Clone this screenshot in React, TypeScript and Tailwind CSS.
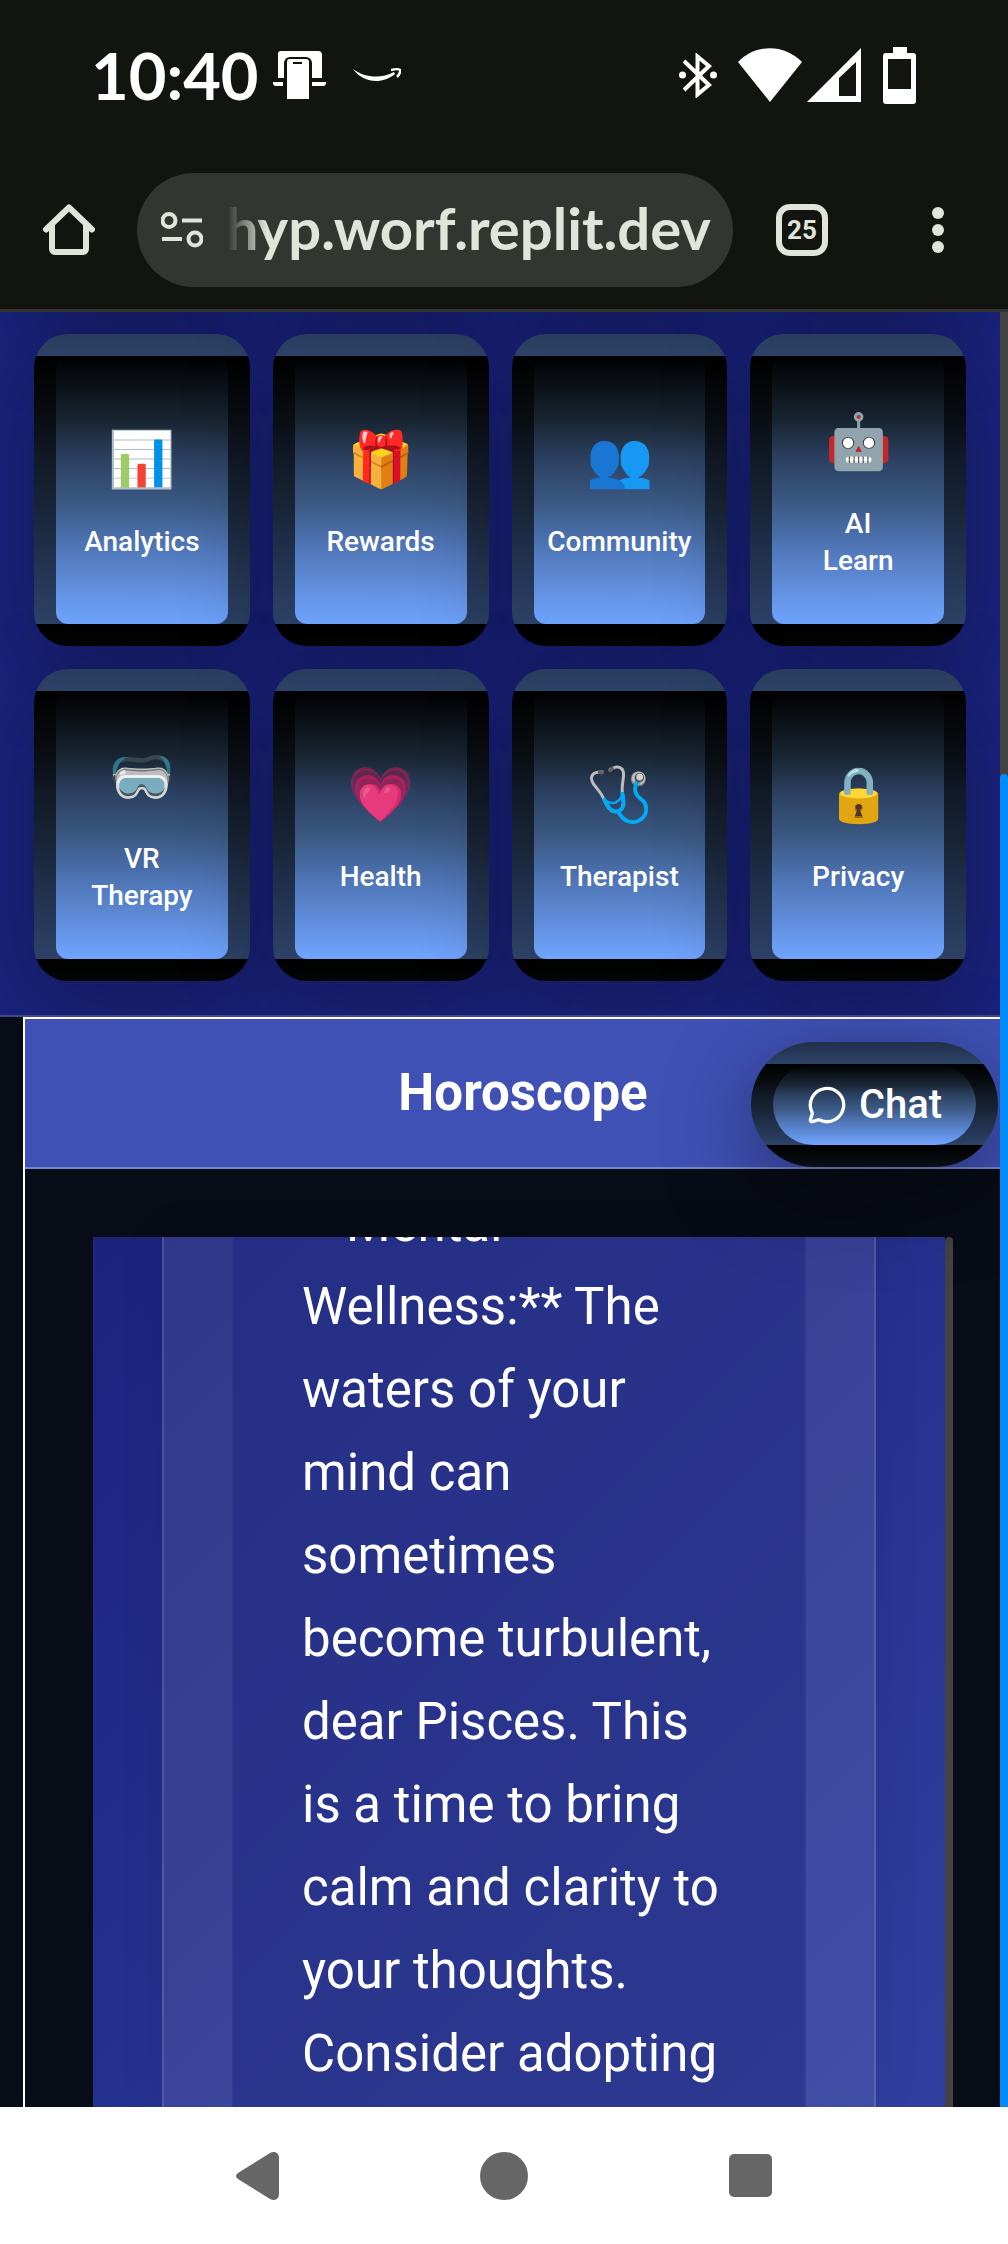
import { MessageCircle } from "lucide-react";

type Tile = { icon: string; label: string };

const tiles: Tile[] = [
  { icon: "📊", label: "Analytics" },
  { icon: "🎁", label: "Rewards" },
  { icon: "👥", label: "Community" },
  { icon: "🤖", label: "AI\nLearn" },
  { icon: "🥽", label: "VR\nTherapy" },
  { icon: "💗", label: "Health" },
  { icon: "🩺", label: "Therapist" },
  { icon: "🔒", label: "Privacy" },
];

const reading = `**Mental
Wellness:** The
waters of your
mind can
sometimes
become turbulent,
dear Pisces. This
is a time to bring
calm and clarity to
your thoughts.
Consider adopting`;

function StatusBar() {
  return (
    <div className="flex h-[150px] items-center pr-[92px] pl-[91px] text-white">
      <time className="w-[165px] font-['Lato'] text-[65px] leading-[64px] font-bold">10:40</time>
      <svg className="ml-[17px] h-[50px] w-[53px]" viewBox="0 0 53 50" fill="currentColor" aria-hidden="true">
        <path d="M8 1h37a4 4 0 0 1 4 4v23H39V13a6 6 0 0 0-6-6H17a6 6 0 0 0-6 6v15H5V4a3 3 0 0 1 3-3Z" />
        <path d="M0 32h10v4H3a3 3 0 0 1-3-3ZM39 32h14v1a3 3 0 0 1-3 3H39Z" />
        <path fillRule="evenodd" d="M16 9h17a3 3 0 0 1 3 3v37H14V12a3 3 0 0 1 2-3Zm4 3v2h9v-2Z" />
      </svg>
      <svg className="ml-[27px] h-4 w-12" viewBox="0 0 48 16" aria-hidden="true">
        <path d="M0 2c12 9 28 10 41 3l1 2c-13 11-32 9-42-5Z" fill="currentColor" />
        <path d="M38 3c4-1 8-1 9 0s-1 5-3 7" fill="none" stroke="currentColor" strokeWidth="2.5" />
      </svg>
      <svg className="ml-auto h-[45px] w-[38px]" viewBox="0 0 38 45" fill="none" stroke="currentColor" strokeWidth="4" aria-hidden="true">
        <path d="M5 8l25 24L18.500 41.500V3.500L30 13 5 37" />
        <circle cx="3.500" cy="22" r="3.500" fill="currentColor" stroke="none" />
        <circle cx="34.500" cy="22" r="3.500" fill="currentColor" stroke="none" />
      </svg>
      <svg className="ml-[21px] h-[54px] w-[64px]" viewBox="0 0 64 54" fill="currentColor" aria-hidden="true">
        <path d="M0 14C18-4.500 46-4.500 64 14L32 54Z" />
      </svg>
      <svg className="ml-[5px] h-[54px] w-[54px]" viewBox="0 0 54 54" fill="currentColor" aria-hidden="true">
        <path fillRule="evenodd" d="M54 0v54H0Zm-5 14L32 30v18h17Z" />
      </svg>
      <svg className="ml-[22px] h-[57px] w-[33px]" viewBox="0 0 33 57" fill="currentColor" aria-hidden="true">
        <path fillRule="evenodd" d="M10 0h14v6h6a3 3 0 0 1 3 3v45a3 3 0 0 1-3 3H3a3 3 0 0 1-3-3V9a3 3 0 0 1 3-3h7ZM5 12v30h23V12Z" />
      </svg>
    </div>
  );
}

function Toolbar() {
  return (
    <div className="flex h-[159px] items-center pr-[52px] pl-[43px] text-[#e1e4db]">
      <button aria-label="Home" className="shrink-0">
        <svg className="h-[52px] w-[52px]" viewBox="0 0 52 52" fill="none" stroke="currentColor" strokeWidth="6" strokeLinejoin="round" strokeLinecap="round" aria-hidden="true">
          <path d="M3 25.500 26 3.500l23 22" />
          <path d="M9 21v24a3 3 0 0 0 3 3h28a3 3 0 0 0 3-3V21" />
        </svg>
      </button>
      <div className="ml-[42px] flex h-[114px] min-w-0 flex-1 items-center rounded-full bg-[#333630] pr-[22px] pl-6">
        <button aria-label="Site information" className="shrink-0">
          <svg className="h-9 w-[42px]" viewBox="0 0 42 36" fill="none" stroke="currentColor" strokeWidth="4" aria-hidden="true">
            <circle cx="8" cy="8.500" r="6.500" />
            <path d="M21 8.500h20M1 27h20" />
            <circle cx="34" cy="27" r="6.500" />
          </svg>
        </button>
        <input
          aria-label="Address"
          readOnly
          value="hyp.worf.replit.dev"
          className="ml-5 min-w-0 flex-1 bg-transparent pb-1 text-right font-['Lato'] text-[58px] leading-[70px] font-bold outline-none [mask-image:linear-gradient(to_right,transparent_4px,black_44px)]"
        />
      </div>
      <button aria-label="Open tabs" className="ml-[43px] flex h-[52px] w-[52px] shrink-0 items-center justify-center rounded-[14px] border-6 border-current text-[26px] leading-none font-bold">
        25
      </button>
      <button aria-label="More options" className="ml-[92px] flex w-[36px] shrink-0 flex-col items-center gap-[5px]">
        <span className="h-3 w-3 rounded-full bg-current" />
        <span className="h-3 w-3 rounded-full bg-current" />
        <span className="h-3 w-3 rounded-full bg-current" />
      </button>
    </div>
  );
}

function TileGrid() {
  return (
    <nav className="overflow-hidden border-b-2 border-[#47468c] bg-[#1a237e] px-[34px] pb-[34px]">
      <div className="-mt-[121px] grid grid-cols-4 gap-[23px]">
        {tiles.slice(0, 4).map((tile) => (
          <div key={tile.label} className="h-[120px] rounded-[34px] shadow-[0_23px_91px_rgba(0,0,0,0.3)]" />
        ))}
        {tiles.map((tile) => (
          <button
            key={tile.label}
            className="flex h-[312px] flex-col items-center justify-center rounded-[34px] border-[22px] border-black/60 bg-linear-[180deg,#000000,#1a2634_25%,#2b4060_38%,#3b5984_55%,#5077b9_72%,#70a5ff] text-white shadow-[0_23px_91px_rgba(0,0,0,0.3)]"
          >
            <span aria-hidden="true" className="mt-2 mb-8 flex h-[63px] items-center text-[54px] leading-[63px]">
              {tile.icon}
            </span>
            <span className="text-[28px] leading-[37px] font-medium whitespace-pre-line">{tile.label}</span>
          </button>
        ))}
      </div>
    </nav>
  );
}

function Horoscope() {
  return (
    <section className="ml-[23px] flex min-h-0 w-full flex-1 flex-col border-2 border-b-0 border-white">
      <header className="border-b-2 border-[#7986cb] bg-[#3f51b5] py-[42px] text-center">
        <h2 className="text-[51px] leading-[64px] font-bold text-white">Horoscope</h2>
      </header>
      <div className="flex min-h-0 flex-1 px-[68px] pt-[68px]">
        <div className="flex min-w-0 flex-1 bg-linear-[135deg,#1a237e,#303f9f] px-[69px]">
          <div className="flex min-w-0 flex-1 overflow-hidden border-x-2 border-white/12 bg-white/9 px-[68px] shadow-[0_0_45px_rgba(0,0,0,0.08)]">
            <div className="min-w-0 flex-1 border-x-2 border-white/3 bg-[#1a237e]/50 px-[68px]">
              <p className="-mt-[55px] text-[51px] leading-[83px] whitespace-pre text-white">{reading}</p>
            </div>
          </div>
        </div>
        <div className="w-2 rounded-t-full bg-[#424242]" />
      </div>
    </section>
  );
}

function NavigationBar() {
  return (
    <footer className="flex h-[137px] items-center justify-center gap-[201px] bg-white text-[#666666]">
      <button aria-label="Back">
        <svg className="h-12 w-[43px]" viewBox="0 0 43 48" fill="currentColor" aria-hidden="true">
          <path d="M2 21 34 1c5-2.500 9 0 9 5v36c0 5-4 7.500-9 5L2 27c-2.500-1.500-2.500-4.500 0-6Z" />
        </svg>
      </button>
      <button aria-label="Home screen" className="h-12 w-12 rounded-full bg-current" />
      <button aria-label="Recent apps" className="h-[43px] w-[43px] rounded-[5px] bg-current" />
    </footer>
  );
}

export default function App() {
  return (
    <div className="flex h-screen flex-col overflow-hidden bg-[#080c16] font-['Roboto',sans-serif]">
      <div className="shrink-0 border-b-3 border-[#333630] bg-[#12140f]">
        <StatusBar />
        <Toolbar />
      </div>
      <div className="flex min-h-0 flex-1">
        <main className="flex min-w-0 flex-1 flex-col overflow-hidden">
          <TileGrid />
          <div className="relative flex min-h-0 flex-1 flex-col">
            <Horoscope />
            <button className="absolute top-[25px] right-[2px] flex h-[125px] w-[247px] items-center justify-center gap-3 rounded-full border-[22px] border-black/60 bg-linear-[180deg,#000000,#1a2634_25%,#2b4060_38%,#3b5984_55%,#5077b9_72%,#70a5ff] text-[40px] font-medium text-white shadow-[0_23px_91px_rgba(0,0,0,0.4)]">
              <MessageCircle size={40} aria-hidden="true" />
              Chat
            </button>
          </div>
        </main>
        <div className="flex w-2 flex-col bg-[#424242]">
          <div className="mt-[462px] flex-1 rounded-t-full bg-[#028bf8]" />
        </div>
      </div>
      <NavigationBar />
    </div>
  );
}
